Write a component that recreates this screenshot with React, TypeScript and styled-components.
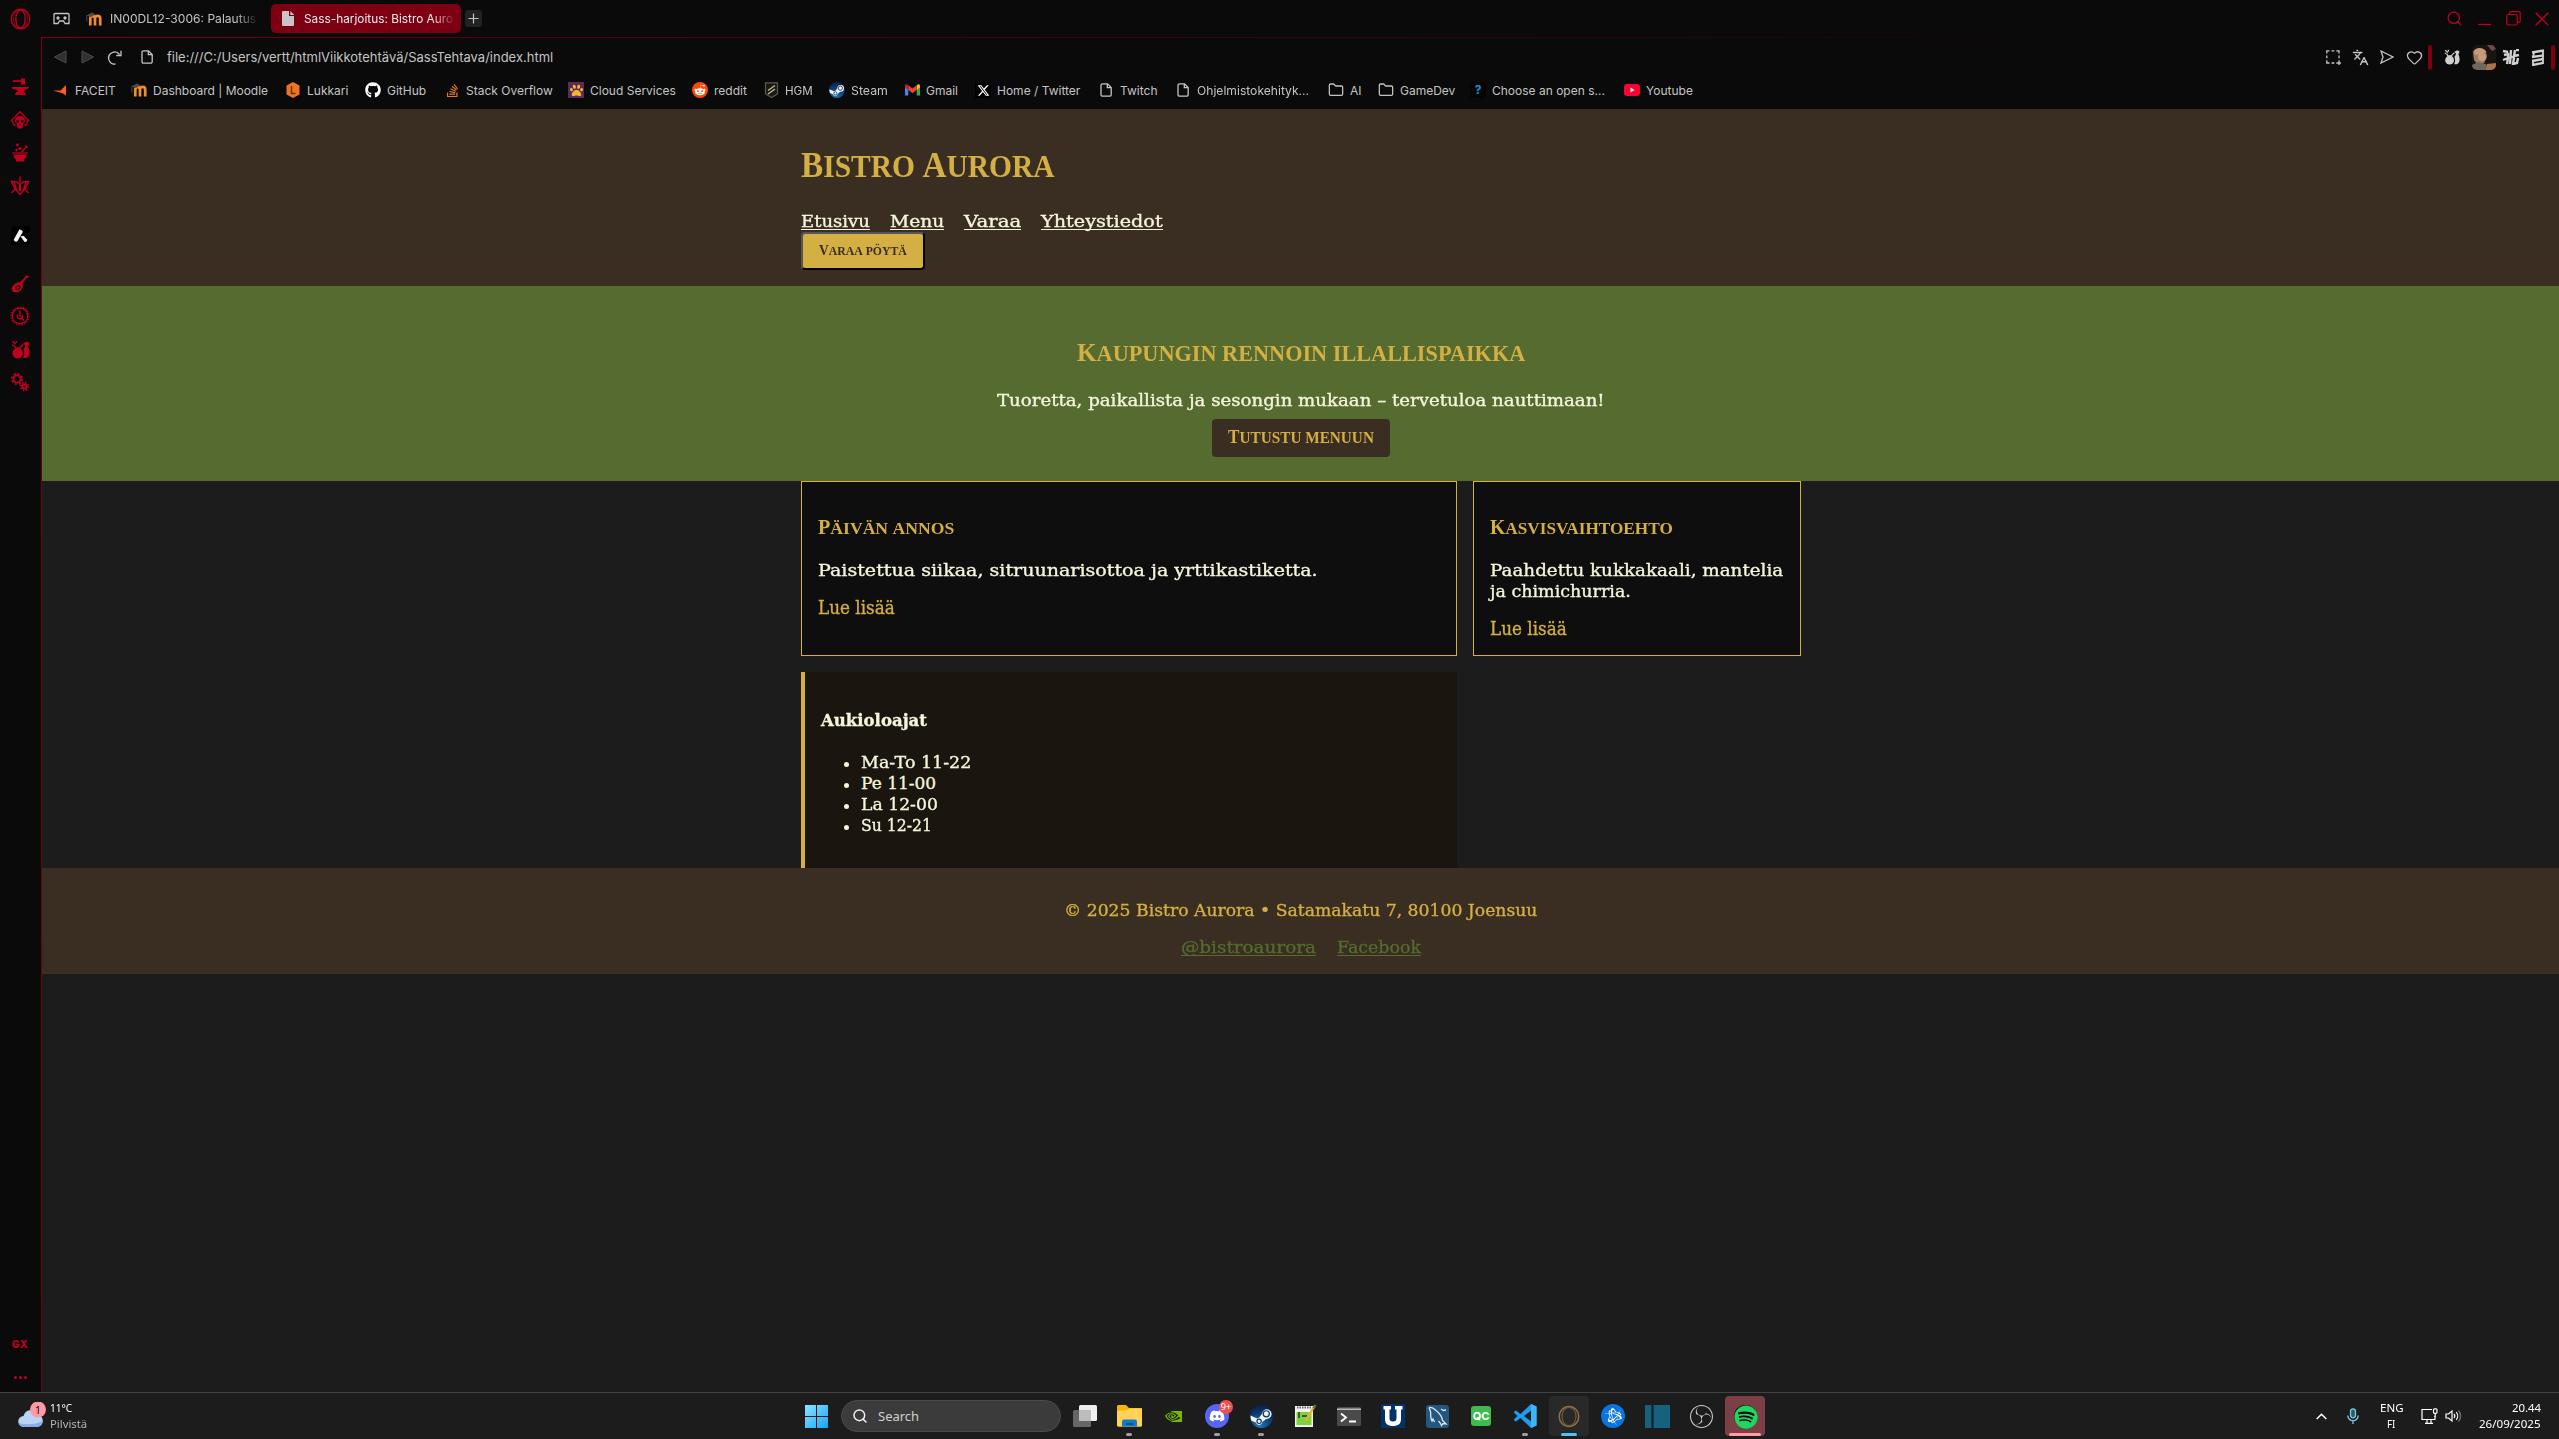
import React, { useLayoutEffect, useRef, useState } from "react";
import styled, { createGlobalStyle, css } from "styled-components";
import { FaBattleNet, FaDiscord, FaGithub, FaPaw, FaRedditAlien, FaSpotify, FaStackOverflow, FaSteam } from "react-icons/fa";
import { FaXTwitter } from "react-icons/fa6";
import { SiMysql, SiNvidia, SiObsstudio } from "react-icons/si";
import { Folder, Heart, Languages, Search } from "lucide-react";

const color = {
  chrome: "#0a0a0a",
  page: "#1c1c1c",
  brown: "#3a2d21",
  green: "#556b2f",
  gold: "#d4af44",
  cream: "#f5f5dc",
  red: "#c0001f",
  darkRed: "#7d0012",
  label: "#c4c4c4",
};

const ui = `Inter, "Liberation Sans", sans-serif`;
const system = `"Noto Sans", "Open Sans", sans-serif`;
const bodyFace = `"DejaVu Serif", "Liberation Serif", serif`;
const titleFace = `"Liberation Serif", serif`;

const Global = createGlobalStyle`
  * { box-sizing: border-box; }
  html, body { margin: 0; padding: 0; background: ${color.chrome}; overflow: hidden; }
  h1, h2, h3, h4, p, ul { margin: 0; padding: 0; font-weight: inherit; font-size: inherit; }
  a { color: inherit; text-decoration: none; }
  svg { display: block; flex: none; }
`;

/* ---------- text fitted to a fixed measure ---------- */

const FitBox = styled.span<{ $w: number }>`
  display: inline-block;
  width: ${(p) => p.$w}px;
  white-space: nowrap;
  vertical-align: top;
`;
const FitInner = styled.span`
  display: inline-block;
  transform-origin: 0 50%;
  vertical-align: top;
`;

function Fit({ w, children }: { w: number; children: React.ReactNode }) {
  const ref = useRef<HTMLSpanElement>(null);
  const [k, setK] = useState(1);
  useLayoutEffect(() => {
    if (ref.current) setK(w / ref.current.offsetWidth);
  }, [w]);
  return (
    <FitBox $w={w}>
      <FitInner ref={ref} style={{ transform: `scaleX(${k})` }}>
        {children}
      </FitInner>
    </FitBox>
  );
}

const Word = styled.span<{ $cap: number }>`
  display: inline-block;
  text-transform: uppercase;
  vertical-align: baseline;
  &::first-letter {
    font-size: ${(p) => p.$cap}px;
  }
`;

function Caps({ text, w, size, small }: { text: string; w: number; size: number; small: number }) {
  return (
    <Fit w={w}>
      {text.split(" ").map((word, i) => (
        <React.Fragment key={i}>
          {i > 0 && " "}
          <Word $cap={/^[A-ZÄÖ]/.test(word) ? size : small}>{word}</Word>
        </React.Fragment>
      ))}
    </Fit>
  );
}

/* ---------- frame ---------- */

const Screen = styled.div`
  width: 2559px;
  height: 1439px;
  display: flex;
  flex-direction: column;
  background: ${color.chrome};
  font-family: ${ui};
  overflow: hidden;
`;
const Row = styled.div`
  display: flex;
  align-items: center;
`;
const Browser = styled.div`
  height: 1392px;
  display: flex;
`;
const Side = styled.aside`
  width: 42px;
  display: flex;
  flex-direction: column;
  align-items: center;
  padding: 8px 2px 0 0;
  color: ${color.red};
`;
const SideSlot = styled.div<{ $h: number }>`
  height: ${(p) => p.$h}px;
  width: 40px;
  display: grid;
  place-items: center;
`;
const SideBadge = styled.div`
  width: 19px;
  height: 19px;
  border-radius: 3px;
  background: #000;
`;
const Spacer = styled.div`
  flex: 1;
`;
const GX = styled.div`
  font: 800 10.5px/12px ${ui};
  letter-spacing: 0.4px;
  height: 37px;
`;
const Dots = styled.div`
  display: flex;
  gap: 2px;
  height: 16px;
  i {
    width: 3px;
    height: 3px;
    border-radius: 2px;
    background: ${color.red};
  }
`;
const Main = styled.div`
  flex: 1;
  min-width: 0;
  display: flex;
  flex-direction: column;
`;
const TabStrip = styled(Row)`
  height: 37px;
  padding: 0 8px 0 11px;
  color: ${color.label};
  font-size: 12px;
`;
const Tab = styled.div<{ $active?: boolean }>`
  display: flex;
  align-items: center;
  height: 29px;
  border-radius: 5px;
  ${(p) =>
    p.$active
      ? css`
          width: 190px;
          padding-left: 11px;
          gap: 9px;
          margin-right: 4px;
          background: ${color.darkRed};
          color: #ececec;
        `
      : css`
          width: 191px;
          padding-left: 6px;
          gap: 8px;
          margin-left: 10px;
        `}
`;
const TabLabel = styled.div`
  white-space: nowrap;
  mask-image: linear-gradient(90deg, #000 86%, transparent 102%);
`;
const NewTab = styled.div`
  width: 17px;
  height: 17px;
  border-radius: 3px;
  background: #222;
  display: grid;
  place-items: center;
`;
const WinControls = styled(Row)`
  color: ${color.red};
  margin-right: -1px;
`;
const Slot = styled.div<{ $w: number }>`
  width: ${(p) => p.$w}px;
  display: grid;
  place-items: center;
`;
const Panel = styled.div`
  flex: 1;
  border-top: 1px solid;
  border-left: 1px solid;
  border-image: linear-gradient(100deg, #7d0012 0%, #5a0010 12%, #1a0508 70%, ${color.chrome} 80%) 1;
  display: flex;
  flex-direction: column;
  margin-left: -1px;
`;
const AddressBar = styled(Row)`
  height: 38px;
  padding: 0 4px 0 5px;
  color: ${color.label};
  font-size: 13px;
`;
const Url = styled.div`
  margin-left: 1px;
`;
const RedBar = styled.div`
  width: 4px;
  height: 25px;
  border-radius: 2px;
  background: ${color.darkRed};
`;
const Avatar = styled.div`
  width: 24px;
  height: 25px;
  border-radius: 5px;
  overflow: hidden;
`;
const Bookmarks = styled(Row)`
  height: 33px;
  padding: 0 0 5px 11px;
  font-size: 12px;
  color: ${color.label};
`;
const Mark = styled.div<{ $w: number }>`
  width: ${(p) => p.$w}px;
  display: flex;
  align-items: center;
  gap: 6px;
`;
const MarkIcon = styled.div`
  width: 16px;
  height: 16px;
  display: grid;
  place-items: center;
`;
const Tile = styled.div<{ $bg: string; $fg?: string; $s?: number; $r?: number; $f?: number }>`
  width: ${(p) => p.$s ?? 16}px;
  height: ${(p) => p.$s ?? 16}px;
  border-radius: ${(p) => p.$r ?? 0}px;
  background: ${(p) => p.$bg};
  color: ${(p) => p.$fg ?? "#fff"};
  font: 700 ${(p) => p.$f ?? 11}px/1 ${ui};
  display: grid;
  place-items: center;
`;

/* ---------- web page ---------- */

const Page = styled.div`
  flex: 1;
  background: ${color.page};
  font-family: ${bodyFace};
  font-size: 17px;
  line-height: 21px;
  color: ${color.cream};
  -webkit-text-stroke: 0.35px currentColor;
`;
const Container = styled.div`
  width: 1000px;
  margin-left: 759px;
`;
const Header = styled.header`
  height: 177px;
  padding-top: 34px;
  background: ${color.brown};
`;
const titleBase = css`
  font-family: ${titleFace};
  font-weight: 700;
  color: ${color.gold};
  -webkit-text-stroke: 0;
`;
const H1 = styled.h1`
  ${titleBase}
  font-size: 31px;
  line-height: 46px;
  height: 46px;
  font-weight: 700;
`;
const Nav = styled.nav`
  display: flex;
  gap: 20px;
  margin-top: 21px;
  height: 22px;
  line-height: 22px;
`;
const NavLink = styled.a`
  height: 20px;
  border-bottom: 1px solid ${color.cream};
`;
const BookButton = styled.button`
  ${titleBase}
  display: block;
  width: 124px;
  height: 38px;
  padding: 0 0 1px 16px;
  text-align: left;
  border: 2px solid #000;
  border-top-color: #555;
  border-left-color: #555;
  border-radius: 4px;
  background: ${color.gold};
  color: ${color.brown};
  font-size: 13.5px;
  line-height: 32px;
`;
const Hero = styled.section`
  height: 195px;
  padding-top: 51px;
  background: ${color.green};
  display: flex;
  flex-direction: column;
  align-items: center;
`;
const H2 = styled.h2`
  ${titleBase}
  font-size: 23px;
  line-height: 32px;
  height: 32px;
  font-weight: 700;
`;
const HeroText = styled.p`
  margin-top: 20px;
  height: 22px;
  line-height: 22px;
`;
const MenuButton = styled.a`
  ${titleBase}
  margin-top: 8px;
  width: 178px;
  height: 38px;
  padding-left: 16px;
  border-radius: 4px;
  background: ${color.brown};
  color: ${color.gold};
  font-size: 16px;
  line-height: 37px;
`;
const Grid = styled.main`
  width: 1000px;
  margin-left: 759px;
  display: grid;
  grid-template-columns: 2fr 1fr;
  gap: 16px;
`;
const Card = styled.article`
  height: 175px;
  border: 1px solid ${color.gold};
  background: #0e0e0e;
  padding: 32px 16px 0;
`;
const H3 = styled.h3`
  ${titleBase}
  font-size: 17.5px;
  line-height: 26px;
  height: 26px;
  font-weight: 700;
`;
const CardText = styled.p`
  margin-top: 20px;
  display: flex;
  flex-direction: column;
`;
const More = styled.a`
  display: block;
  margin-top: 14px;
  height: 24px;
  font-size: 19px;
  line-height: 24px;
  color: ${color.gold};
`;
const Hours = styled.section`
  height: 196px;
  border-left: 4px solid ${color.gold};
  background: #1a150f;
  padding: 38px 16px 0;
`;
const H4 = styled.h4`
  font-weight: 700;
  height: 21px;
`;
const List = styled.ul`
  margin-top: 21px;
  list-style: none;
`;
const Item = styled.li`
  height: 21px;
  display: flex;
  align-items: center;
  padding-left: 23px;
  gap: 12px;
  &::before {
    content: "";
    width: 5px;
    height: 5px;
    border-radius: 50%;
    background: ${color.cream};
    margin-top: 3px;
  }
`;
const Footer = styled.footer`
  height: 106px;
  padding-top: 32px;
  background: ${color.brown};
  display: flex;
  flex-direction: column;
  align-items: center;
  color: ${color.gold};
`;
const Social = styled.div`
  display: flex;
  gap: 21px;
  margin-top: 16px;
  color: ${color.green};
  a {
    height: 19px;
    border-bottom: 1px solid ${color.green};
  }
`;

/* ---------- taskbar ---------- */

const Taskbar = styled.div`
  height: 47px;
  border-top: 1px solid #424242;
  background: #1c1c1c;
  display: flex;
  align-items: center;
  font-family: ${system};
  font-size: 11px;
  color: #fff;
`;
const Weather = styled(Row)`
  width: 805px;
  padding-left: 18px;
  gap: 4px;
`;
const WeatherText = styled.div`
  line-height: 16px;
  span.muted {
    color: #b4b4b4;
  }
`;
const SearchBox = styled(Row)`
  width: 220px;
  height: 32px;
  margin: 0 2px 0 13px;
  border-radius: 16px;
  border: 1px solid #4a4a4a;
  background: #3b3b3b;
  padding-left: 10px;
  gap: 10px;
  font-size: 13px;
  color: #d0d0d0;
`;
const TaskApp = styled.div<{ $tone?: string }>`
  width: 40px;
  height: 40px;
  margin: 0 2px;
  border-radius: 4px;
  display: grid;
  place-items: center;
  position: relative;
  background: ${(p) => p.$tone ?? "none"};
`;
const Running = styled.i<{ $w: number; $c: string }>`
  position: absolute;
  bottom: 0;
  left: calc(50% - ${(p) => p.$w / 2}px);
  width: ${(p) => p.$w}px;
  height: 3px;
  border-radius: 2px;
  background: ${(p) => p.$c};
`;
const Badge = styled.span`
  position: absolute;
  top: 4px;
  right: 4px;
  width: 14px;
  height: 14px;
  border-radius: 7px;
  background: #f0504d;
  font: 9px/14px ${system};
  text-align: center;
`;
const Tray = styled(Row)`
  margin-left: auto;
  padding-right: 18px;
`;
const Two = styled.div<{ $align: string; $w: number }>`
  width: ${(p) => p.$w}px;
  display: flex;
  flex-direction: column;
  align-items: ${(p) => p.$align};
  line-height: 16px;
`;

/* ---------- drawings ---------- */

const MoodleIcon = () => (
  <svg width="16" height="14" viewBox="0 0 16 14" fill="none">
    <path d="M4.300 13.500V6.500a2.300 2.300 0 0 1 4.700 0v7M9 6.500a2.600 2.600 0 0 1 5.200 0v7" stroke="#f28c2e" strokeWidth="2.700" />
    <path d="M0 3.500L6 .5l3.500 1.800L5 5z" fill="#4b4b4b" />
    <path d="M.8 3.500v6" stroke="#4b4b4b" strokeWidth="1" />
  </svg>
);

const FileIcon = ({ solid }: { solid?: boolean }) =>
  solid ? (
    <svg width="13" height="15" viewBox="0 0 13 15" fill="#c9c4c5">
      <path d="M1 0h6v5h5v9a1 1 0 0 1-1 1H1a1 1 0 0 1-1-1V1a1 1 0 0 1 1-1zM8.300 0l4 4h-4z" />
    </svg>
  ) : (
    <svg width="13" height="14" viewBox="0 0 13 14" fill="none" stroke="#c4c4c4" strokeWidth="1.300">
      <path d="M2.500.8h5l3.700 3.700v7.200a1.500 1.500 0 0 1-1.500 1.500H2.500A1.500 1.500 0 0 1 1 11.700V2.300A1.500 1.500 0 0 1 2.500.8zM7.300.8v3.900h3.900" />
    </svg>
  );

const Potion = ({ s, c }: { s: number; c: string }) => (
  <svg width={s} height={s} viewBox="0 0 20 20" fill={c} stroke={c}>
    <circle cx="7" cy="14" r="5.500" stroke="none" />
    <path d="M4.500 8l-1-2M9.500 8l3.500-3.500M1.500 1.500l3.500 3M1 5.500h2M5.500 1v2M4 8.500h6.500" fill="none" strokeWidth="1.600" />
    <path d="M12.500 19c2-3 1.500-7 .5-9 1-2 2-2.500 2-4l-2-2.500L16.500 1.500l3 1.500-1.500 4c2.500 4.500 2 11-2 12z" stroke="none" />
  </svg>
);

const gear = (cx: number, cy: number, r: number) => (
  <>
    <circle cx={cx} cy={cy} r={r} fill="none" stroke="currentColor" strokeWidth="1.800" />
    <circle cx={cx} cy={cy} r={r + 1.600} fill="none" stroke="currentColor" strokeWidth="1.800" strokeDasharray={`${((r + 1.600) * Math.PI) / 8} ${((r + 1.600) * Math.PI) / 8}`} />
  </>
);

const S = ({ children }: { children: React.ReactNode }) => (
  <svg width="20" height="20" viewBox="0 0 20 20" fill="currentColor">
    {children}
  </svg>
);

const Anvil = () => (
  <S>
    <path d="M3 3.300h8V1.500h4v6h-4V5H3zM1.500 10H19v1.500c-3 .2-5 1.500-5.500 3.500h1.500l1 3H5l1-3h2c0-1.500-1-2.500-3-2.500-2 0-3-1-3.500-2.500z" />
  </S>
);
const Skull = () => (
  <S>
    <path d="M3.500 13L1.500 10.500 10 1.800l8.500 8.700-2 2.500" fill="none" stroke="currentColor" strokeWidth="1.400" />
    <path fillRule="evenodd" d="M10 6c3.200 0 5 2 5 4.600 0 1.700-.8 2.700-2 3.300V17l-1.500 1.500h-3L7 17v-3.100c-1.200-.6-2-1.600-2-3.300C5 8 6.800 6 10 6zM7.800 10a1.400 1.400 0 1 0 0 2.800 1.400 1.400 0 0 0 0-2.800zm4.400 0a1.400 1.400 0 1 0 0 2.800 1.400 1.400 0 0 0 0-2.800zM10 13.500l-.8 1.500h1.600z" />
    <path d="M3 14l2.500 1.500M17 14l-2.500 1.500" stroke="currentColor" strokeWidth="1.500" />
  </S>
);
const Mortar = () => (
  <S>
    <path d="M3.500 11.500h13c0 2.500-1 4.200-2.800 5.200l.8 1.800h-9l.8-1.800c-1.800-1-2.800-2.700-2.800-5.200zM10 9.500l5-5 .3-2.700 3.200 2.500-2.600.8L12.500 9.500z" />
    <path d="M2 10h16" stroke="currentColor" strokeWidth="1.200" />
    <circle cx="7.500" cy="2" r="1.400" />
    <circle cx="10" cy="5.500" r="1.600" />
    <circle cx="6.500" cy="7" r="1.200" />
  </S>
);
const Blades = () => (
  <S>
    <g fill="none" stroke="currentColor" strokeWidth="1.400">
      <path d="M10 .5v6M1.500 5.500l5 .3L10 8.500l3.500-2.700 5-.3-3 6.500L10 18.500 4.500 12zM1.500 17L6 12M18.500 17L14 12M4 6l3 9M16 6l-3 9" />
      <path d="M10 7.500v8" strokeWidth="2" />
    </g>
  </S>
);
const Lute = () => (
  <S>
    <path fillRule="evenodd" d="M2.500 12.500c2-3 5-4.500 7.500-4.200l5-5.300.6-1.800 3.400.8-.8 1.700-1.800.2-4 5.300c1.500 2.500 0 6-2.800 8-3 2-6.500 1.300-7.500-.5-.8-1.300-.5-2.700.4-4.200zm4.300-.7c-1.600 1-2.200 2.500-1.500 3.500s2.400 1 3.800 0 1.900-2.500 1.200-3.500-2-.9-3.500 0z" />
    <circle cx="7.800" cy="13.500" r="1.300" />
  </S>
);
const Clock = () => (
  <S>
    <circle cx="10" cy="10" r="7.800" fill="none" stroke="currentColor" strokeWidth="1.200" />
    <circle cx="10" cy="10" r="9" fill="none" stroke="currentColor" strokeWidth="1.200" strokeDasharray="1.500 1.300" />
    <path d="M10 4.500v6.500M8 8.500c-1.500 1.500-1 4 1.500 4.200s3.500-2.500 2.500-4.200M11.500 12l2.500 2.500" fill="none" stroke="currentColor" strokeWidth="1.400" />
  </S>
);
const Gears = () => <S>{gear(7, 7, 3.600)}{gear(14.500, 14.500, 2.200)}</S>;
const Knife = () => (
  <svg width="19" height="19" viewBox="0 0 19 19" fill="#f4f4f4">
    <path d="M8.500 3.200l2.500 1.300c.8.500.9 1.200.5 2L6.500 15c-.5.800-1.200 1-2 .6l-1-.6c-.7-.4-.9-1-.4-1.900zM9.500 10.500l3-.8 3.800 4c-.2 1.700-1.200 2.300-2.600 2.200z" />
  </svg>
);

const SteamIcon = ({ s }: { s: number }) => (
  <Tile $bg="radial-gradient(circle at 40% 90%, #1a7ab8, #0b2f66 60%, #08153a)" $s={s} $r={s / 2}>
    <svg width={s} height={s} viewBox="0 0 24 24">
      <path d="M0.500 11l7 3a3.800 3.800 0 0 1 2-.6l3-4.200a5 5 0 1 1 4.500 5.300l-4 3a3.600 3.600 0 0 1-7 .8L1.500 16.500A12 12 0 0 1 .5 11z" fill="#eef3f8" />
      <circle cx="17" cy="9.200" r="3.200" fill="#eef3f8" stroke="#12325f" strokeWidth="1.300" />
      <circle cx="9.500" cy="17" r="2.300" fill="none" stroke="#12325f" strokeWidth="1.200" />
    </svg>
  </Tile>
);
const GmailIcon = () => (
  <svg width="15" height="12" viewBox="0 0 15 12">
    <path d="M0 2v9.500h3.300V4.500z" fill="#4285f4" />
    <path d="M15 2v9.500h-3.300V4.500z" fill="#34a853" />
    <path d="M11.700 1.200L13 .4c1-.5 2 .2 2 1.400v1.700l-3.300 2.500z" fill="#fbbc04" />
    <path d="M3.300 1.200L7.500 4.400l4.200-3.200V6L7.500 9.200 3.300 6z" fill="#ea4335" />
    <path d="M3.300 1.200L2 .4C1 0 0 .6 0 1.800v1.700L3.300 6z" fill="#c5221f" />
  </svg>
);
const FaceitIcon = () => (
  <svg width="16" height="14" viewBox="0 0 16 14">
    <path d="M13 2v10.500c-2.500-2-5-3.200-12-4.500v-.6h6.500z" fill="#ff5a1f" />
  </svg>
);
const HgmIcon = () => (
  <svg width="15" height="16" viewBox="0 0 15 16">
    <path d="M1.500.8h12V12l-6 3.500-6-3.500z" fill="#191817" stroke="#5e5a4d" strokeWidth="1.200" />
    <path d="M4 8.500l7-5M4 12l7-5" stroke="#c9b98c" strokeWidth="1.400" />
  </svg>
);
const FolderIcon = () => <Folder size={16} strokeWidth={1.900} />;

const bookmarks: { w: number; t: string; tw: number; icon: React.ReactNode }[] = [
  { w: 78, t: "FACEIT", tw: 41, icon: <FaceitIcon /> },
  { w: 154, t: "Dashboard | Moodle", tw: 115, icon: <MoodleIcon /> },
  { w: 80, t: "Lukkari", tw: 41, icon: (
    <svg width="16" height="16" viewBox="0 0 16 16"><path d="M8 0l6.500 3.500v9L8 16l-6.500-3.500v-9z" fill="#ec7423" /><path d="M6.500 4v7.500h4" stroke="#6b3008" strokeWidth="1.500" fill="none" /></svg>
  ) },
  { w: 79, t: "GitHub", tw: 39, icon: <FaGithub size={16} color="#fff" /> },
  { w: 124, t: "Stack Overflow", tw: 87, icon: <FaStackOverflow size={15} color="#e87722" /> },
  { w: 124, t: "Cloud Services", tw: 86, icon: <Tile $bg="#5b2a55"><FaPaw size={13} color="#f5b335" /></Tile> },
  { w: 71, t: "reddit", tw: 33, icon: <Tile $bg="#ff4500" $r={8}><FaRedditAlien size={12} /></Tile> },
  { w: 66, t: "HGM", tw: 28, icon: <HgmIcon /> },
  { w: 75, t: "Steam", tw: 37, icon: <SteamIcon s={16} /> },
  { w: 71, t: "Gmail", tw: 32, icon: <GmailIcon /> },
  { w: 123, t: "Home / Twitter", tw: 83, icon: <Tile $bg="#000"><FaXTwitter size={13} /></Tile> },
  { w: 77, t: "Twitch", tw: 37, icon: <FileIcon /> },
  { w: 153, t: "Ohjelmistokehityk...", tw: 112, icon: <FileIcon /> },
  { w: 50, t: "AI", tw: 12, icon: <FolderIcon /> },
  { w: 92, t: "GameDev", tw: 55, icon: <FolderIcon /> },
  { w: 154, t: "Choose an open s...", tw: 113, icon: <Tile $bg="#050505" $fg="#1596d8" $f={12}>?</Tile> },
  { w: 80, t: "Youtube", tw: 47, icon: (
    <svg width="16" height="12" viewBox="0 0 16 12"><rect width="16" height="12" rx="3" fill="#ff0033" /><path d="M6.500 3.500v5L10.500 6z" fill="#fff" /></svg>
  ) },
];

const grey = "#a0a0a0";
const taskApps: { icon: React.ReactNode; run?: [number, string]; tone?: string; badge?: string }[] = [
  { icon: (
    <svg width="24" height="22" viewBox="0 0 24 22"><rect x="0" y="5" width="18" height="17" rx="1.500" fill="#666" /><rect x="6" y="0" width="18" height="16" rx="1.500" fill="#eee" /><path d="M6 5h12v11H6z" fill="#bdbdbd" /></svg>
  ) },
  { run: [6, grey], icon: (
    <svg width="25" height="22" viewBox="0 0 25 22"><path d="M0 1.500A1.500 1.500 0 0 1 1.500 0H9l3 3h12a1 1 0 0 1 1 1v16a1.500 1.500 0 0 1-1.500 1.500h-22A1.500 1.500 0 0 1 0 20z" fill="#f7b500" /><path d="M0 6l11-1 1.500-1.500H25V20a1.500 1.500 0 0 1-1.500 1.500h-22A1.500 1.500 0 0 1 0 20z" fill="#ffd35a" /><path d="M5 16.500a2 2 0 0 1 2-2h11a2 2 0 0 1 2 2v5H5z" fill="#1478c8" /><path d="M9 18h7v2H9z" fill="#0b4f8f" /></svg>
  ) },
  { icon: <Tile $bg="#1b1f19" $s={20}><SiNvidia size={17} color="#76b900" /></Tile> },
  { run: [6, grey], badge: "9+", icon: <Tile $bg="#5865f2" $s={24} $r={12}><FaDiscord size={16} /></Tile> },
  { run: [6, grey], icon: <SteamIcon s={23} /> },
  { icon: (
    <svg width="24" height="24" viewBox="0 0 24 24"><rect x="2" y="2" width="18" height="21" fill="#f2f5ea" /><rect x="3.500" y="8" width="15" height="13" fill="#7ed33a" /><path d="M4 3.500h14" stroke="#667" strokeWidth="2" strokeDasharray="1.500 1" /><path d="M6 8v6M9 12h5" stroke="#234" strokeWidth="1.500" /><path d="M21.500 2l-9 15" stroke="#e8b23c" strokeWidth="2.400" /><path d="M22.500 1l-2 3.500" stroke="#574" strokeWidth="2.400" /></svg>
  ) },
  { icon: (
    <svg width="24" height="19" viewBox="0 0 24 19"><rect width="24" height="19" rx="1.500" fill="#4a4a4a" /><path d="M0 1.500h24V3H0z" fill="#bbb" /><path d="M4 6.500l5 4-5 4M12 14.500h7" stroke="#fff" strokeWidth="1.800" fill="none" /></svg>
  ) },
  { icon: (
    <svg width="24" height="24" viewBox="0 0 24 24"><rect width="24" height="24" fill="#03316a" /><path d="M2.500 2h7.500v3.500H8.500V14c0 2.500 1 3.500 3.500 3.500s3.500-1 3.500-3.500V5.500H14V2h7.500v3.500H20V15c0 5-3 7-8 7s-8-2-8-7V5.500H2.500z" fill="#fff" /></svg>
  ) },
  { icon: <Tile $bg="#24567f" $s={23} $r={3}><svg width="21" height="21" viewBox="0 0 21 21" fill="none" stroke="#dce8f0" strokeWidth="1.300"><path d="M2 1.500c3-1 5 1 7 3 4 3 6 6 6.500 10l3.500 3.500-3-.3-1.500 1.800c-.5-2-1.500-3-3-4.500M2 1.500l1.500 4c.5 4-.5 6 1.500 9.500l1-2 1.500 3M14 3l2.500 1.500L19 4" /></svg></Tile> },
  { icon: (
    <Tile $bg="#3fb950" $s={20} $r={3} $f={11}>QC</Tile>
  ) },
  { run: [6, grey], icon: (
    <svg width="25" height="24" viewBox="0 0 24 24"><path d="M17.500 0L23 2.600v18.800L17.500 24 7 14l-4.500 3.500L.5 16.300v-1L4 12 .5 8.700v-1l2-1.200L7 10zM17.500 6.800L10.500 12l7 5.200z" fill="#1f9cf0" fillRule="evenodd" /><path d="M17.500 0L23 2.600v18.800L17.500 24z" fill="#3db4f5" /></svg>
  ) },
  { run: [16, "#4cc2ff"], tone: "#292929", icon: (
    <svg width="22" height="23" viewBox="0 0 22 23" fill="none"><ellipse cx="11" cy="11.500" rx="9.800" ry="10" stroke="#8d7044" strokeWidth="1.500" /><ellipse cx="11" cy="11.500" rx="7" ry="9.200" stroke="#6f5a3c" strokeWidth="1.200" /></svg>
  ) },
  { icon: <Tile $bg="#0a74e0" $s={24} $r={12}><FaBattleNet size={17} /></Tile> },
  { icon: (
    <svg width="25" height="23" viewBox="0 0 25 23"><rect width="6.500" height="23" fill="#14627c" /><rect x="8.500" width="16.500" height="23" fill="#14627c" /><path d="M7.500 0v23" stroke="#052530" strokeWidth="1.500" /></svg>
  ) },
  { icon: <SiObsstudio size={23} color="#c9c9c9" /> },
  { run: [32, "#ff9aa8"], tone: "#7c3f46", icon: <Tile $bg="#000" $s={23} $r={12}><FaSpotify size={24} color="#1ed760" /></Tile> },
];

/* ---------- composition ---------- */

export default function App() {
  return (
    <Screen>
      <Global />
      <Browser>
        <Side>
          <svg width="21" height="22" viewBox="0 0 21 22" fill="none" stroke="#c0001f">
            <ellipse cx="10.500" cy="11" rx="9.300" ry="9.800" strokeWidth="1.300" />
            <ellipse cx="10.500" cy="11" rx="4.700" ry="9" strokeWidth="1.300" />
            <ellipse cx="10.500" cy="11" rx="7" ry="9.500" strokeWidth="0.700" />
          </svg>
          <SideSlot $h={41} />
          <SideSlot $h={32}><Anvil /></SideSlot>
          <SideSlot $h={33}><Skull /></SideSlot>
          <SideSlot $h={33}><Mortar /></SideSlot>
          <SideSlot $h={33}><Blades /></SideSlot>
          <SideSlot $h={66}><SideBadge><Knife /></SideBadge></SideSlot>
          <SideSlot $h={31}><Lute /></SideSlot>
          <SideSlot $h={34}><Clock /></SideSlot>
          <SideSlot $h={33}><Potion s={19} c={color.red} /></SideSlot>
          <SideSlot $h={32}><Gears /></SideSlot>
          <Spacer />
          <GX>GX</GX>
          <Dots><i /><i /><i /></Dots>
        </Side>
        <Main>
          <TabStrip>
            <svg width="17" height="14" viewBox="0 0 17 14" fill="none" stroke="#c4c4c4" strokeWidth="1.300">
              <path d="M2 1.500h13a1 1 0 0 1 1 1v9h-4l-1.500-2.500h-4L5 11.500H1v-9a1 1 0 0 1 1-1z" />
              <circle cx="5" cy="6" r="1" fill="#c4c4c4" /><circle cx="12" cy="6" r="1" fill="#c4c4c4" />
            </svg>
            <Tab>
              <MoodleIcon />
              <TabLabel><Fit w={146}>IN00DL12-3006: Palautus</Fit></TabLabel>
            </Tab>
            <Tab $active>
              <FileIcon solid />
              <TabLabel><Fit w={149}>Sass-harjoitus: Bistro Auro</Fit></TabLabel>
            </Tab>
            <NewTab>
              <svg width="11" height="11" viewBox="0 0 11 11" stroke="#c4c4c4" strokeWidth="1.200"><path d="M5.500.5v10M.5 5.500h10" /></svg>
            </NewTab>
            <Spacer />
            <WinControls>
              <Slot $w={29}><Search size={17} strokeWidth={1.800} /></Slot>
              <Slot $w={30}><svg width="13" height="14" viewBox="0 0 13 14"><path d="M0 12.500h13" stroke="#c0001f" strokeWidth="1.300" /></svg></Slot>
              <Slot $w={29}>
                <svg width="15" height="15" viewBox="0 0 15 15" fill="none" stroke="#c0001f" strokeWidth="1.200"><rect x=".8" y="3.500" width="10.500" height="10.500" rx="1.500" /><path d="M3.500 3V2A1.300 1.300 0 0 1 4.800.7h8A1.300 1.300 0 0 1 14.200 2v8a1.300 1.300 0 0 1-1.300 1.300h-1" /></svg>
              </Slot>
              <Slot $w={28}><svg width="14" height="14" viewBox="0 0 14 14" stroke="#c0001f" strokeWidth="1.300"><path d="M.7.7l12.600 12.600M13.300.7L.7 13.300" /></svg></Slot>
            </WinControls>
            <WinEdge />
          </TabStrip>
          <Panel>
            <AddressBar>
              <Slot $w={27}><svg width="15" height="14" viewBox="0 0 15 14" fill="#303030" stroke="#4c4c4c"><path d="M13 1v12L1.500 7z" /></svg></Slot>
              <Slot $w={27}><svg width="15" height="14" viewBox="0 0 15 14" fill="#303030" stroke="#4c4c4c"><path d="M2 1v12l11.500-6z" /></svg></Slot>
              <Slot $w={27}>
                <svg width="15" height="15" viewBox="0 0 15 15" fill="none" stroke="#c4c4c4" strokeWidth="1.300"><path d="M12.500 4.500A6 6 0 1 0 8.500 14" /><path d="M14 .8v4.700H9.300" /></svg>
              </Slot>
              <Slot $w={38}><FileIcon /></Slot>
              <Url><Fit w={386}>file:///C:/Users/vertt/htmlViikkotehtävä/SassTehtava/index.html</Fit></Url>
              <Spacer />
              <Slot $w={27}>
                <svg width="15" height="15" viewBox="0 0 15 15" fill="none" stroke="#c4c4c4" strokeWidth="1.300"><path d="M.8 3.500V.8h2.700M5.500.8h2.800M10.300.8H13v2.700M13 5.500v2.800M.8 5.500v2.800M.8 10.300V13h2.700M5.500 13h2.800M10.300 13h4.700M13 10.300V15" /></svg>
              </Slot>
              <Slot $w={26}><Languages size={17} strokeWidth={1.900} /></Slot>
              <Slot $w={28}><svg width="14" height="14" viewBox="0 0 14 14" fill="none" stroke="#c4c4c4" strokeWidth="1.300"><path d="M1 1l12 6L1 13l2-6z" /></svg></Slot>
              <Slot $w={26}><Heart size={17} strokeWidth={1.800} /></Slot>
              <RedBarGap />
              <RedBar />
              <Slot $w={40}><Potion s={16} c="#d0d0d0" /></Slot>
              <Avatar>
                <svg width="24" height="25" viewBox="0 0 24 25">
                  <rect width="24" height="25" fill="#171412" /><path d="M15 0h7l2 4-4 2z" fill="#6b4a4a" /><path d="M1 7c1-4 10-5 13-1l1 6-3 6-7 1-3-4z" fill="#a67c5b" /><path d="M2 6c2-4 10-4 12 1l-4 2-7 1z" fill="#c49b76" /><circle cx="10" cy="12" r="4" fill="#c69a82" /><path d="M0 25v-5l6-3 8 2 3 6z" fill="#6f675e" /><path d="M15 19l9-1v7H14z" fill="#a8744b" />
                </svg>
              </Avatar>
              <Slot $w={29}>
                <svg width="18" height="16" viewBox="0 0 18 16" fill="none" stroke="#d0d0d0" strokeWidth="2.400"><path d="M1 2l5 1M2 6l4-1v4l-5 2M6 9l-1 6M9 1l-1 14M8 8h5M13 1l-1 6 5-1M12 9l-1 6 4-1 1-5M14 1h3" /></svg>
              </Slot>
              <Slot $w={26}>
                <svg width="14" height="17" viewBox="0 0 14 17" fill="none" stroke="#d0d0d0" strokeWidth="2.400"><path d="M1 3.500L13 1.500M1 8l11-1.500M1 12l11-2M1.500 16l10-2" /><path d="M12 1v14M3 4l-1 4M2 12v5" strokeWidth="1.800" /></svg>
              </Slot>
              <RedBar />
            </AddressBar>
            <Bookmarks>
              {bookmarks.map((b) => (
                <Mark key={b.t} $w={b.w}>
                  <MarkIcon>{b.icon}</MarkIcon>
                  <Fit w={b.tw}>{b.t}</Fit>
                </Mark>
              ))}
            </Bookmarks>
            <Page>
              <Header>
                <Container>
                  <H1><Caps text="Bistro Aurora" w={254} size={35} small={31} /></H1>
                  <Nav>
                    <NavLink><Fit w={69}>Etusivu</Fit></NavLink>
                    <NavLink><Fit w={54}>Menu</Fit></NavLink>
                    <NavLink><Fit w={57}>Varaa</Fit></NavLink>
                    <NavLink><Fit w={122}>Yhteystiedot</Fit></NavLink>
                  </Nav>
                  <BookButton><Caps text="Varaa pöytä" w={88} size={15.5} small={13.5} /></BookButton>
                </Container>
              </Header>
              <Hero>
                <H2><Caps text="Kaupungin rennoin illallispaikka" w={448} size={26} small={23} /></H2>
                <HeroText><Fit w={608}>Tuoretta, paikallista ja sesongin mukaan – tervetuloa nauttimaan!</Fit></HeroText>
                <MenuButton><Caps text="Tutustu menuun" w={146} size={18} small={16} /></MenuButton>
              </Hero>
              <Grid>
                <Card>
                  <H3><Caps text="Päivän annos" w={136} size={20} small={17.5} /></H3>
                  <CardText><Fit w={500}>Paistettua siikaa, sitruunarisottoa ja yrttikastiketta.</Fit></CardText>
                  <More><Fit w={77}>Lue lisää</Fit></More>
                </Card>
                <Card>
                  <H3><Caps text="Kasvisvaihtoehto" w={183} size={20} small={17.5} /></H3>
                  <CardText>
                    <Fit w={293}>Paahdettu kukkakaali, mantelia</Fit>
                    <Fit w={141}>ja chimichurria.</Fit>
                  </CardText>
                  <More><Fit w={77}>Lue lisää</Fit></More>
                </Card>
                <Hours>
                  <H4><Fit w={106}>Aukioloajat</Fit></H4>
                  <List>
                    <Item><Fit w={110}>Ma-To 11-22</Fit></Item>
                    <Item><Fit w={75}>Pe 11-00</Fit></Item>
                    <Item><Fit w={77}>La 12-00</Fit></Item>
                    <Item><Fit w={71}>Su 12-21</Fit></Item>
                  </List>
                </Hours>
              </Grid>
              <Footer>
                <p><Fit w={473}>© 2025 Bistro Aurora • Satamakatu 7, 80100 Joensuu</Fit></p>
                <Social>
                  <a><Fit w={135}>@bistroaurora</Fit></a>
                  <a><Fit w={84}>Facebook</Fit></a>
                </Social>
              </Footer>
            </Page>
          </Panel>
        </Main>
      </Browser>
      <Taskbar>
        <Weather>
          <svg width="28" height="28" viewBox="0 0 28 28">
            <path d="M6 25a5.500 5.500 0 0 1-.5-11 7.500 7.500 0 0 1 14-1.500A6.300 6.300 0 0 1 19 25z" fill="#b9d4f5" />
            <path d="M6 25a5.500 5.500 0 0 1-5-4c6 2 16 2 24-2a6 6 0 0 1-6 6z" fill="#86aee6" />
            <circle cx="20" cy="7.500" r="8" fill="#ff99a4" />
            <text x="20" y="11.500" fontSize="11" textAnchor="middle" fill="#111">1</text>
          </svg>
          <WeatherText>
            <div><Fit w={22}>11°C</Fit></div>
            <div><span className="muted"><Fit w={37}>Pilvistä</Fit></span></div>
          </WeatherText>
        </Weather>
        <svg width="23" height="23" viewBox="0 0 23 23">
          <defs><linearGradient id="win" x1="0" y1="0" x2="1" y2="1" gradientUnits="objectBoundingBox"><stop offset="0" stopColor="#8be4ff" /><stop offset="1" stopColor="#18a4f5" /></linearGradient></defs>
          <path d="M0 0h11v11H0zM12 0h11v11H12zM0 12h11v11H0zM12 12h11v11H12z" fill="url(#win)" />
        </svg>
        <SearchBox>
          <Search size={16} color="#f0f0f0" strokeWidth={2.200} />
          <Fit w={41}>Search</Fit>
        </SearchBox>
        {taskApps.map((a, i) => (
          <TaskApp key={i} $tone={a.tone}>
            {a.icon}
            {a.badge && <Badge>{a.badge}</Badge>}
            {a.run && <Running $w={a.run[0]} $c={a.run[1]} />}
          </TaskApp>
        ))}
        <Tray>
          <Slot $w={32}><svg width="11" height="7" viewBox="0 0 11 7" fill="none" stroke="#fff" strokeWidth="1.500"><path d="M.7 6L5.500 1.200 10.300 6" /></svg></Slot>
          <Slot $w={32}>
            <svg width="12" height="16" viewBox="0 0 12 16" fill="none" stroke="#7fcbe0" strokeWidth="1.300"><rect x="3.500" y=".8" width="5" height="9" rx="2.500" fill="#2d5a66" /><path d="M.8 7.500a5.200 5.200 0 0 0 10.400 0M6 12.700V16" /></svg>
          </Slot>
          <Two $align="center" $w={44}><Fit w={23}>ENG</Fit><Fit w={8}>FI</Fit></Two>
          <Slot $w={32}>
            <svg width="17" height="16" viewBox="0 0 17 16" fill="none" stroke="#fff" strokeWidth="1.200"><path d="M11 1.500H1v10h13V8M4 15.300h8M6 11.500v3.500M10 11.500v3.500" /><rect x="12.500" y=".8" width="3.500" height="4.500" rx="1" /><path d="M14.200 5.300V9" /></svg>
          </Slot>
          <Slot $w={15}>
            <svg width="17" height="14" viewBox="0 0 17 14" fill="none" stroke="#fff" strokeWidth="1.200"><path d="M1 5h2.500L7 2v10L3.500 9H1z" /><path d="M9 5c1 1.200 1 2.800 0 4M11.200 3.200c2 2.200 2 5.400 0 7.600" /><path d="M13.500 1.500c2.800 3 2.800 8 0 11" stroke="#777" /></svg>
          </Slot>
          <Two $align="flex-end" $w={81}><Fit w={29}>20.44</Fit><Fit w={62}>26/09/2025</Fit></Two>
        </Tray>
      </Taskbar>
    </Screen>
  );
}

const WinEdge = styled.div`
  width: 0;
  margin-right: -4px;
`;
const RedBarGap = styled.div`
  width: 1px;
`;
